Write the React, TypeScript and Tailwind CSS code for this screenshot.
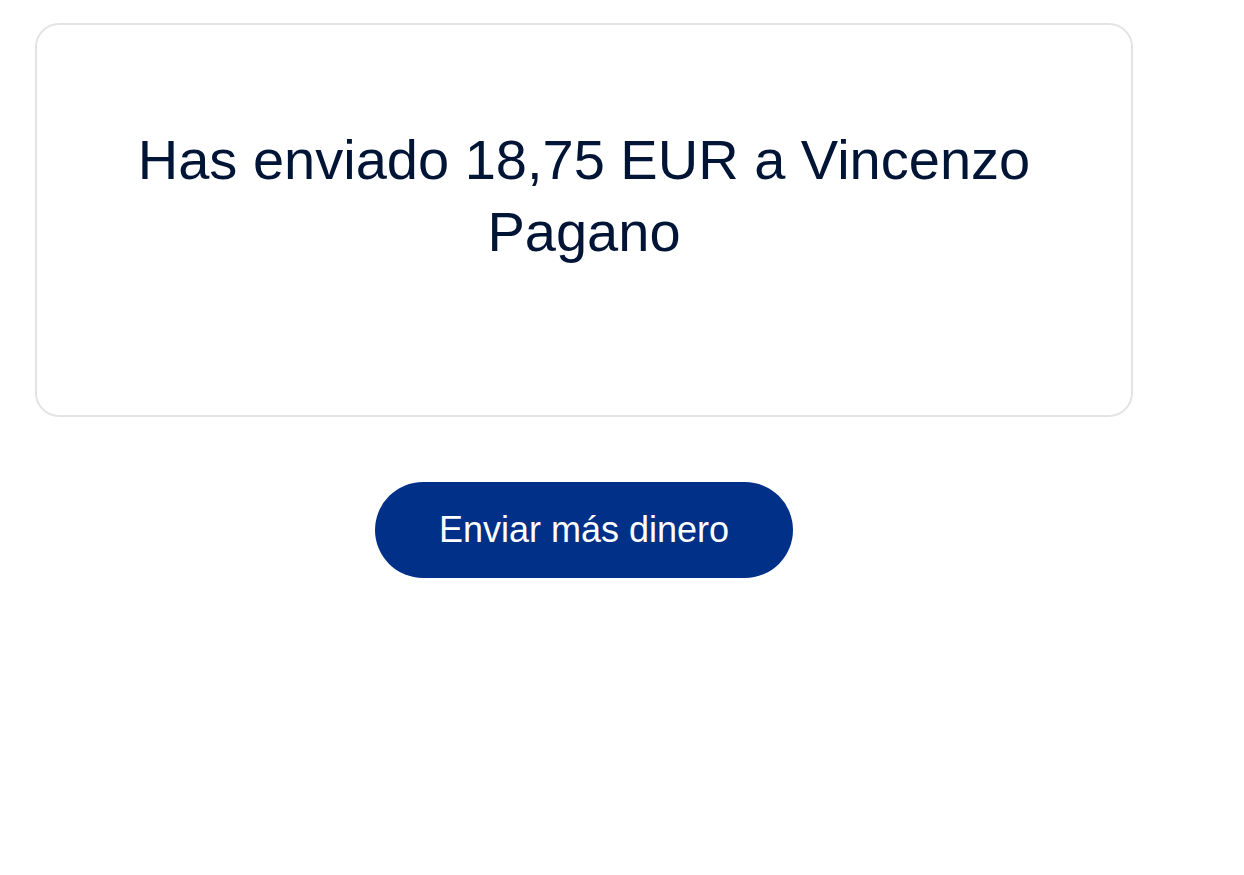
import React from 'react';

export default function App() {
  return (
    <div className="min-h-screen bg-white pl-[35px] pt-[23px] font-['Liberation_Sans',Arial,sans-serif]">
      <div className="w-[1098px]">
        {/* tarjeta de confirmación */}
        <div className="h-[394px] rounded-[24px] border-2 border-[#e4e4e4] px-[80px] pt-[99px]">
          <h1 className="text-center text-[56px] leading-[72px] font-normal text-[#001435]">
            Has enviado 18,75 EUR a Vincenzo Pagano
          </h1>
        </div>

        <div className="mt-[65px] flex justify-center">
          <button className="h-[96px] w-[418px] rounded-full bg-[#003087] text-[36px] text-white">
            Enviar más dinero
          </button>
        </div>
      </div>
    </div>
  );
}
